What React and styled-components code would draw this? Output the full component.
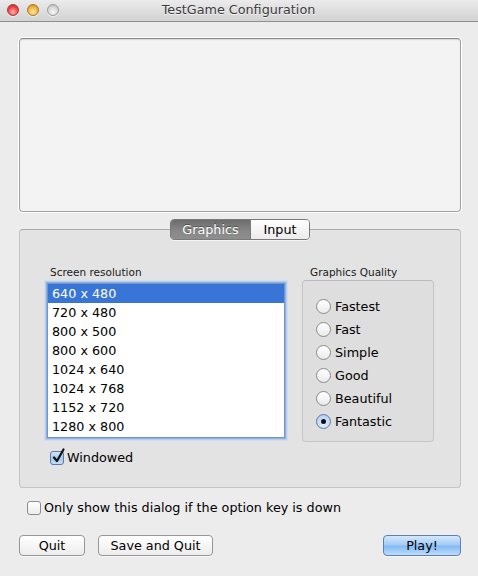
import React from "react";
import styled, { createGlobalStyle } from "styled-components";

const Global = createGlobalStyle`
  html, body { margin: 0; padding: 0; background: #ececec; }
  body { font-family: "DejaVu Sans", "Liberation Sans", sans-serif; }
`;

const Window = styled.div`
  width: 478px;
  height: 576px;
  background: #ececec;
  display: flex;
  flex-direction: column;
  overflow: hidden;
  font-size: 12.75px;
  color: #000;
`;

const TitleBar = styled.div`
  height: 21px;
  flex: none;
  background: linear-gradient(#ebebeb, #d2d2d2);
  border-bottom: 1px solid #8f8f8f;
  display: flex;
  align-items: center;
  position: relative;
`;

const Lights = styled.div`
  display: flex;
  gap: 8px;
  padding-left: 7px;
  margin-top: -2px;
`;

const Light = styled.span`
  width: 12px;
  height: 12px;
  border-radius: 50%;
  box-sizing: border-box;
  border: 1px solid ${(p) => p.$edge};
  background: radial-gradient(circle at 50% 70%, ${(p) => p.$light} 0%, ${(p) => p.$mid} 55%, ${(p) => p.$dark} 100%);
  box-shadow: 0 1px 0 rgba(255,255,255,0.6);
`;

const Title = styled.div`
  flex: 1;
  text-align: center;
  margin-left: -60px;
  margin-top: -3px;
  font-size: 12.75px;
  color: #3c3c3c;
  text-shadow: 0 1px 0 rgba(255,255,255,0.7);
`;

const Body = styled.div`
  padding: 16px 17px 0 19px;
  display: flex;
  flex-direction: column;
`;

const Preview = styled.div`
  height: 174px;
  box-sizing: border-box;
  background: #f3f3f3;
  border: 1px solid #a3a3a3;
  border-top-color: #888;
  border-radius: 4px;
  box-shadow: 0 0 0 1px #fff, inset 0 1px 1px rgba(0,0,0,0.12);
`;

const TabRow = styled.div`
  margin-top: 7px;
  margin-bottom: -11px;
  display: flex;
  justify-content: center;
  position: relative;
  z-index: 1;
`;

const Segments = styled.div`
  display: flex;
  height: 21px;
  box-sizing: border-box;
  border: 1px solid #7a7a7a;
  border-radius: 4px;
  overflow: hidden;
  box-shadow: 0 1px 0 rgba(255,255,255,0.6);
`;

const Segment = styled.div`
  display: flex;
  align-items: center;
  justify-content: center;
  width: ${(p) => p.$w}px;
  font-size: 12.75px;
  color: ${(p) => (p.$active ? "#fff" : "#000")};
  text-shadow: ${(p) => (p.$active ? "0 -1px 0 rgba(0,0,0,0.35)" : "none")};
  background: ${(p) =>
    p.$active
      ? "linear-gradient(#6c6c6c, #888 60%, #8e8e8e)"
      : "linear-gradient(#fff, #f4f4f4 50%, #ececec)"};
  & + & { border-left: 1px solid #7a7a7a; }
`;

const TabPanel = styled.div`
  height: 259px;
  box-sizing: border-box;
  background: #e3e3e3;
  border: 1px solid #c3c3c3;
  border-top-color: #a9a9a9;
  border-radius: 4px;
  padding: 36px 0 0 24px;
  display: grid;
  grid-template-columns: 242px 132px;
  column-gap: 16px;
  align-items: start;
`;

const Column = styled.div`
  display: flex;
  flex-direction: column;
`;

const SmallLabel = styled.div`
  font-size: 10.5px;
  line-height: 13px;
  color: #1a1a1a;
  padding-left: ${(p) => p.$indent}px;
`;

const List = styled.div`
  margin: 4px 0 0 3px;
  width: 238px;
  height: 155px;
  box-sizing: border-box;
  background: #fff;
  border: 1px solid #7596c4;
  box-shadow: 0 0 0 1px #8fb3e3, 0 0 0 2px #b5cdee, 0 0 0 3px #d2dcea;
  display: flex;
  flex-direction: column;
`;

const Row = styled.div`
  height: 19px;
  line-height: 20px;
  padding-left: 4px;
  font-size: 12.75px;
  background: ${(p) => (p.$selected ? "#3875d7" : "transparent")};
  color: ${(p) => (p.$selected ? "#fff" : "#000")};
`;

const CheckRow = styled.label`
  display: flex;
  align-items: center;
  gap: 3px;
  margin: ${(p) => p.$margin};
  font-size: 12.75px;
  line-height: 15px;
`;

const Box = styled.span`
  width: 14px;
  height: 14px;
  box-sizing: border-box;
  border-radius: 3px;
  border: 1px solid ${(p) => (p.$checked ? "#5a7aa8" : "#8c8c8c")};
  background: ${(p) =>
    p.$checked
      ? "linear-gradient(#d6e6f9, #a7c8ee 50%, #c4dcf7)"
      : "linear-gradient(#fff, #ececec)"};
  position: relative;
  flex: none;
`;

const CheckMark = styled.svg`
  position: absolute;
  left: 1px;
  top: -4px;
`;

const QualityBox = styled.div`
  margin-top: 1px;
  height: 162px;
  box-sizing: border-box;
  background: #dedede;
  border: 1px solid #c6c6c6;
  border-top-color: #bcbcbc;
  border-radius: 4px;
  padding: 14px 0 0 13px;
  display: flex;
  flex-direction: column;
`;

const RadioRow = styled.div`
  height: 23px;
  display: flex;
  align-items: center;
  gap: 4px;
  font-size: 12.75px;
`;

const Radio = styled.span`
  width: 15px;
  height: 15px;
  box-sizing: border-box;
  border-radius: 50%;
  border: 1px solid ${(p) => (p.$on ? "#5a7aa8" : "#8a8a8a")};
  background: ${(p) =>
    p.$on
      ? "radial-gradient(circle at 50% 70%, #e4effb, #a9c9ee)"
      : "linear-gradient(#fff, #ebebeb)"};
  display: flex;
  align-items: center;
  justify-content: center;
  flex: none;
  &::after {
    content: "";
    width: 5px;
    height: 5px;
    border-radius: 50%;
    background: #111;
    display: ${(p) => (p.$on ? "block" : "none")};
  }
`;

const Buttons = styled.div`
  margin-top: 20px;
  display: flex;
  align-items: center;
  gap: 13px;
`;

const Button = styled.div`
  height: 21px;
  width: ${(p) => p.$w}px;
  box-sizing: border-box;
  border-radius: 4px;
  border: 1px solid ${(p) => (p.$primary ? "#5f7fae" : "#979797")};
  background: ${(p) =>
    p.$primary
      ? "linear-gradient(#d5e8fc, #a3ccf6 45%, #84bbf4 55%, #bfdcfb)"
      : "linear-gradient(#fff, #f6f6f6 50%, #ececec)"};
  box-shadow: 0 1px 0 rgba(255,255,255,0.6);
  display: flex;
  align-items: center;
  justify-content: center;
  font-size: 12.75px;
  margin-left: ${(p) => (p.$push ? "auto" : "0")};
`;

const resolutions = [
  "640 x 480",
  "720 x 480",
  "800 x 500",
  "800 x 600",
  "1024 x 640",
  "1024 x 768",
  "1152 x 720",
  "1280 x 800",
];

const qualities = ["Fastest", "Fast", "Simple", "Good", "Beautiful", "Fantastic"];

export default function App() {
  return (
    <Window>
      <Global />
      <TitleBar>
        <Lights>
          <Light $edge="#a83b3b" $light="#ffb3b3" $mid="#f04848" $dark="#b01c1c" />
          <Light $edge="#a67a2e" $light="#ffe6a8" $mid="#f2b441" $dark="#c07d16" />
          <Light $edge="#9c9c9c" $light="#f6f6f6" $mid="#d8d8d8" $dark="#b0b0b0" />
        </Lights>
        <Title>TestGame Configuration</Title>
      </TitleBar>
      <Body>
        <Preview />
        <TabRow>
          <Segments>
            <Segment $w={79} $active>Graphics</Segment>
            <Segment $w={58}>Input</Segment>
          </Segments>
        </TabRow>
        <TabPanel>
          <Column>
            <SmallLabel $indent={6}>Screen resolution</SmallLabel>
            <List>
              {resolutions.map((r, i) => (
                <Row key={r} $selected={i === 0}>{r}</Row>
              ))}
            </List>
            <CheckRow $margin="12px 0 0 6px">
              <Box $checked>
                <CheckMark width="13" height="16" viewBox="0 0 13 16">
                  <path d="M2 9.5 L5 13 L11.5 1.5" fill="none" stroke="#111" strokeWidth="2.2" strokeLinecap="round" strokeLinejoin="round" />
                </CheckMark>
              </Box>
              Windowed
            </CheckRow>
          </Column>
          <Column>
            <SmallLabel $indent={8}>Graphics Quality</SmallLabel>
            <QualityBox>
              {qualities.map((q) => (
                <RadioRow key={q}>
                  <Radio $on={q === "Fantastic"} />
                  {q}
                </RadioRow>
              ))}
            </QualityBox>
          </Column>
        </TabPanel>
        <CheckRow $margin="12px 0 0 8px">
          <Box />
          Only show this dialog if the option key is down
        </CheckRow>
        <Buttons>
          <Button $w={66}>Quit</Button>
          <Button $w={115}>Save and Quit</Button>
          <Button $w={78} $primary $push>Play!</Button>
        </Buttons>
      </Body>
    </Window>
  );
}
